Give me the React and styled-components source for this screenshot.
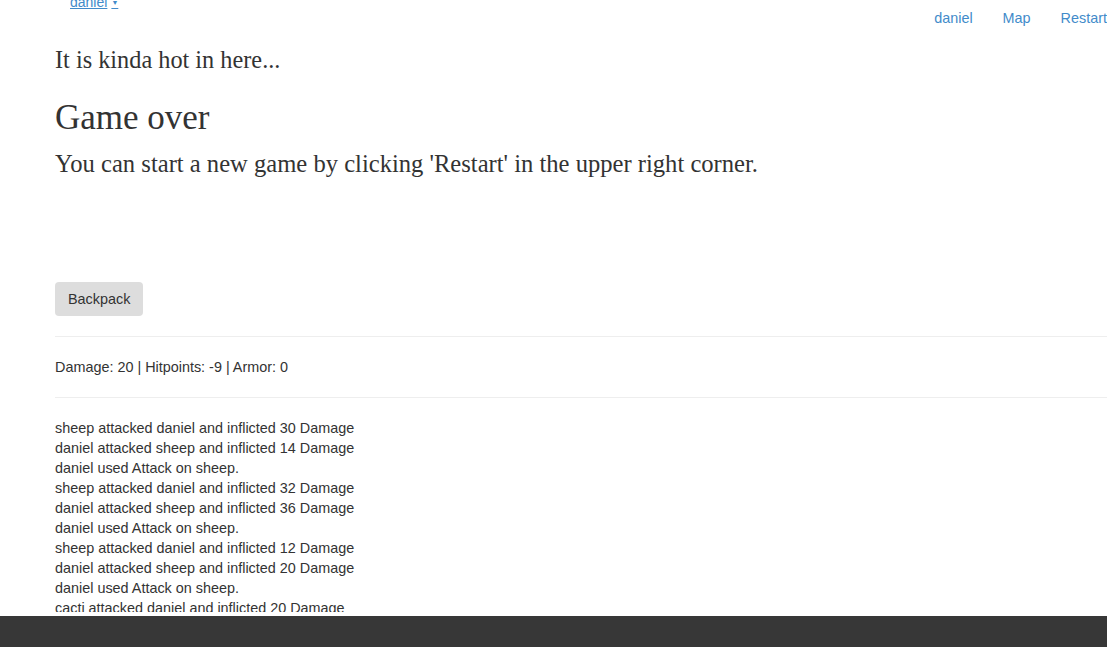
import React from "react";
import styled, { createGlobalStyle } from "styled-components";

const Global = createGlobalStyle`
  html, body { margin: 0; padding: 0; overflow: hidden; }
  body {
    font-family: "Liberation Sans", Arial, sans-serif;
    font-size: 14.4px;
    line-height: 20px;
    color: #333;
    background: #fff;
  }
  * { box-sizing: border-box; }
`;

const Page = styled.div`
  height: 647px;
  display: flex;
  flex-direction: column;
`;

const Header = styled.header`
  display: flex;
  justify-content: space-between;
  align-items: flex-start;
  height: 36px;
`;

const Login = styled.a`
  margin: -8px 0 0 70px;
  color: #428bca;
  text-decoration: underline;
  font-size: 14px;
  line-height: 20px;
  cursor: pointer;
`;

const Caret = styled.span`
  font-size: 7px;
  margin-left: 4px;
  vertical-align: 2px;
`;

const Nav = styled.nav`
  display: flex;
  margin-right: -15px;
`;

const NavLink = styled.a`
  padding: 8px 15px 8px;
  color: #428bca;
  font-size: 14.4px;
  line-height: 20px;
  text-decoration: none;
`;

const Main = styled.main`
  flex: 1;
  padding-left: 55px;
  display: flex;
  flex-direction: column;
  min-height: 0;
`;

const Serif = styled.h1`
  font-family: "Liberation Serif", "Times New Roman", serif;
  font-weight: normal;
  color: #333;
  margin: 0;
`;

const Flavor = styled(Serif)`
  font-size: 24.3px;
  line-height: 30px;
  margin-top: 9px;
`;

const Title = styled(Serif)`
  font-size: 35px;
  line-height: 40px;
  margin-top: 23px;
`;

const Subtitle = styled(Serif)`
  font-size: 24.6px;
  line-height: 30px;
  margin-top: 11px;
`;

const Button = styled.button`
  align-self: flex-start;
  margin-top: 103px;
  height: 34px;
  padding: 6px 13px;
  background: #ddd;
  border: none;
  border-radius: 4px;
  font-family: "Liberation Sans", Arial, sans-serif;
  font-size: 14.4px;
  line-height: 20px;
  color: #333;
`;

const Rule = styled.hr`
  border: 0;
  border-top: 1px solid #eee;
  margin: ${(p) => p.$top}px 0 0 0;
`;

const Stats = styled.div`
  margin-top: 20px;
  line-height: 20px;
`;

const Log = styled.div`
  margin-top: 20px;
  flex: 1;
  min-height: 0;
  overflow: hidden;
  margin-bottom: 4px;
`;

const LogLine = styled.div`
  line-height: 20px;
`;

const Footer = styled.footer`
  height: 31px;
  background: #373737;
  flex: none;
`;

const log = [
  "sheep attacked daniel and inflicted 30 Damage",
  "daniel attacked sheep and inflicted 14 Damage",
  "daniel used Attack on sheep.",
  "sheep attacked daniel and inflicted 32 Damage",
  "daniel attacked sheep and inflicted 36 Damage",
  "daniel used Attack on sheep.",
  "sheep attacked daniel and inflicted 12 Damage",
  "daniel attacked sheep and inflicted 20 Damage",
  "daniel used Attack on sheep.",
  "cacti attacked daniel and inflicted 20 Damage",
  "daniel attacked cacti and inflicted 18 Damage",
];

export default function App() {
  return (
    <Page>
      <Global />
      <Header>
        <Login>
          daniel<Caret>▼</Caret>
        </Login>
        <Nav>
          <NavLink>daniel</NavLink>
          <NavLink>Map</NavLink>
          <NavLink>Restart</NavLink>
        </Nav>
      </Header>
      <Main>
        <Flavor>It is kinda hot in here...</Flavor>
        <Title>Game over</Title>
        <Subtitle>
          You can start a new game by clicking 'Restart' in the upper right corner.
        </Subtitle>
        <Button>Backpack</Button>
        <Rule $top={20} />
        <Stats>Damage: 20 | Hitpoints: -9 | Armor: 0</Stats>
        <Rule $top={20} />
        <Log>
          {log.map((l, i) => (
            <LogLine key={i}>{l}</LogLine>
          ))}
        </Log>
      </Main>
      <Footer />
    </Page>
  );
}
